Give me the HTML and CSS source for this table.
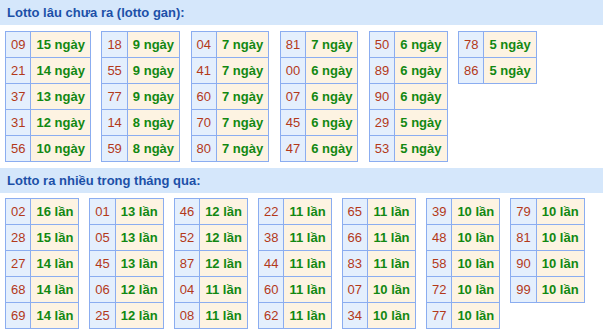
FILE: index.html
```html
<!DOCTYPE html>
<html lang="vi">
<head>
<meta charset="utf-8">
<link rel="stylesheet" href="styles.css">
</head>
<body>
<div class="section">
  <div class="title">Lotto lâu chưa ra (lotto gan):</div>
  <div class="tables first">
    <table class="tb"><tr><td class="n">09</td><td class="c">15 ngày</td></tr><tr><td class="n">21</td><td class="c">14 ngày</td></tr><tr><td class="n">37</td><td class="c">13 ngày</td></tr><tr><td class="n">31</td><td class="c">12 ngày</td></tr><tr><td class="n">56</td><td class="c">10 ngày</td></tr></table>
    <table class="tb"><tr><td class="n">18</td><td class="c">9 ngày</td></tr><tr><td class="n">55</td><td class="c">9 ngày</td></tr><tr><td class="n">77</td><td class="c">9 ngày</td></tr><tr><td class="n">14</td><td class="c">8 ngày</td></tr><tr><td class="n">59</td><td class="c">8 ngày</td></tr></table>
    <table class="tb"><tr><td class="n">04</td><td class="c">7 ngày</td></tr><tr><td class="n">41</td><td class="c">7 ngày</td></tr><tr><td class="n">60</td><td class="c">7 ngày</td></tr><tr><td class="n">70</td><td class="c">7 ngày</td></tr><tr><td class="n">80</td><td class="c">7 ngày</td></tr></table>
    <table class="tb"><tr><td class="n">81</td><td class="c">7 ngày</td></tr><tr><td class="n">00</td><td class="c">6 ngày</td></tr><tr><td class="n">07</td><td class="c">6 ngày</td></tr><tr><td class="n">45</td><td class="c">6 ngày</td></tr><tr><td class="n">47</td><td class="c">6 ngày</td></tr></table>
    <table class="tb"><tr><td class="n">50</td><td class="c">6 ngày</td></tr><tr><td class="n">89</td><td class="c">6 ngày</td></tr><tr><td class="n">90</td><td class="c">6 ngày</td></tr><tr><td class="n">29</td><td class="c">5 ngày</td></tr><tr><td class="n">53</td><td class="c">5 ngày</td></tr></table>
    <table class="tb"><tr><td class="n">78</td><td class="c">5 ngày</td></tr><tr><td class="n">86</td><td class="c">5 ngày</td></tr></table>
  </div>
</div>
<div class="section">
  <div class="title">Lotto ra nhiều trong tháng qua:</div>
  <div class="tables second">
    <table class="tb"><tr><td class="n">02</td><td class="c">16 lần</td></tr><tr><td class="n">28</td><td class="c">15 lần</td></tr><tr><td class="n">27</td><td class="c">14 lần</td></tr><tr><td class="n">68</td><td class="c">14 lần</td></tr><tr><td class="n">69</td><td class="c">14 lần</td></tr></table>
    <table class="tb"><tr><td class="n">01</td><td class="c">13 lần</td></tr><tr><td class="n">05</td><td class="c">13 lần</td></tr><tr><td class="n">45</td><td class="c">13 lần</td></tr><tr><td class="n">06</td><td class="c">12 lần</td></tr><tr><td class="n">25</td><td class="c">12 lần</td></tr></table>
    <table class="tb"><tr><td class="n">46</td><td class="c">12 lần</td></tr><tr><td class="n">52</td><td class="c">12 lần</td></tr><tr><td class="n">87</td><td class="c">12 lần</td></tr><tr><td class="n">04</td><td class="c">11 lần</td></tr><tr><td class="n">08</td><td class="c">11 lần</td></tr></table>
    <table class="tb"><tr><td class="n">22</td><td class="c">11 lần</td></tr><tr><td class="n">38</td><td class="c">11 lần</td></tr><tr><td class="n">44</td><td class="c">11 lần</td></tr><tr><td class="n">60</td><td class="c">11 lần</td></tr><tr><td class="n">62</td><td class="c">11 lần</td></tr></table>
    <table class="tb"><tr><td class="n">65</td><td class="c">11 lần</td></tr><tr><td class="n">66</td><td class="c">11 lần</td></tr><tr><td class="n">83</td><td class="c">11 lần</td></tr><tr><td class="n">07</td><td class="c">10 lần</td></tr><tr><td class="n">34</td><td class="c">10 lần</td></tr></table>
    <table class="tb"><tr><td class="n">39</td><td class="c">10 lần</td></tr><tr><td class="n">48</td><td class="c">10 lần</td></tr><tr><td class="n">58</td><td class="c">10 lần</td></tr><tr><td class="n">72</td><td class="c">10 lần</td></tr><tr><td class="n">77</td><td class="c">10 lần</td></tr></table>
    <table class="tb"><tr><td class="n">79</td><td class="c">10 lần</td></tr><tr><td class="n">81</td><td class="c">10 lần</td></tr><tr><td class="n">90</td><td class="c">10 lần</td></tr><tr><td class="n">99</td><td class="c">10 lần</td></tr></table>
  </div>
</div>
</body>
</html>
```
FILE: styles.css
```css
html, body {
  margin: 0;
  padding: 0;
  background: #ffffff;
  font-family: "Liberation Sans", Arial, sans-serif;
}
.section {
  margin-bottom: 6px;
}
.title {
  background: #d5e7fb;
  color: #1c50a8;
  font-weight: bold;
  font-size: 13px;
  height: 25px;
  line-height: 25px;
  padding-left: 7px;
}
.tables {
  display: flex;
  flex-wrap: wrap;
  align-items: flex-start;
  padding: 6px 5px 0 5px;
}
.tables.first {
  gap: 10.5px;
}
.tables.second {
  gap: 10px;
  padding-top: 5px;
}
.tb {
  border-collapse: collapse;
  font-size: 13px;
}
.tb td {
  border: 1px solid #8badf0;
  height: 25px;
  padding: 0 5px;
  text-align: center;
  line-height: 15px;
}
.tb .n {
  background: #e4effd;
  color: #b3391a;
}
.tb .c {
  background: #fdf3e2;
  color: #128812;
  font-weight: bold;
}
```
